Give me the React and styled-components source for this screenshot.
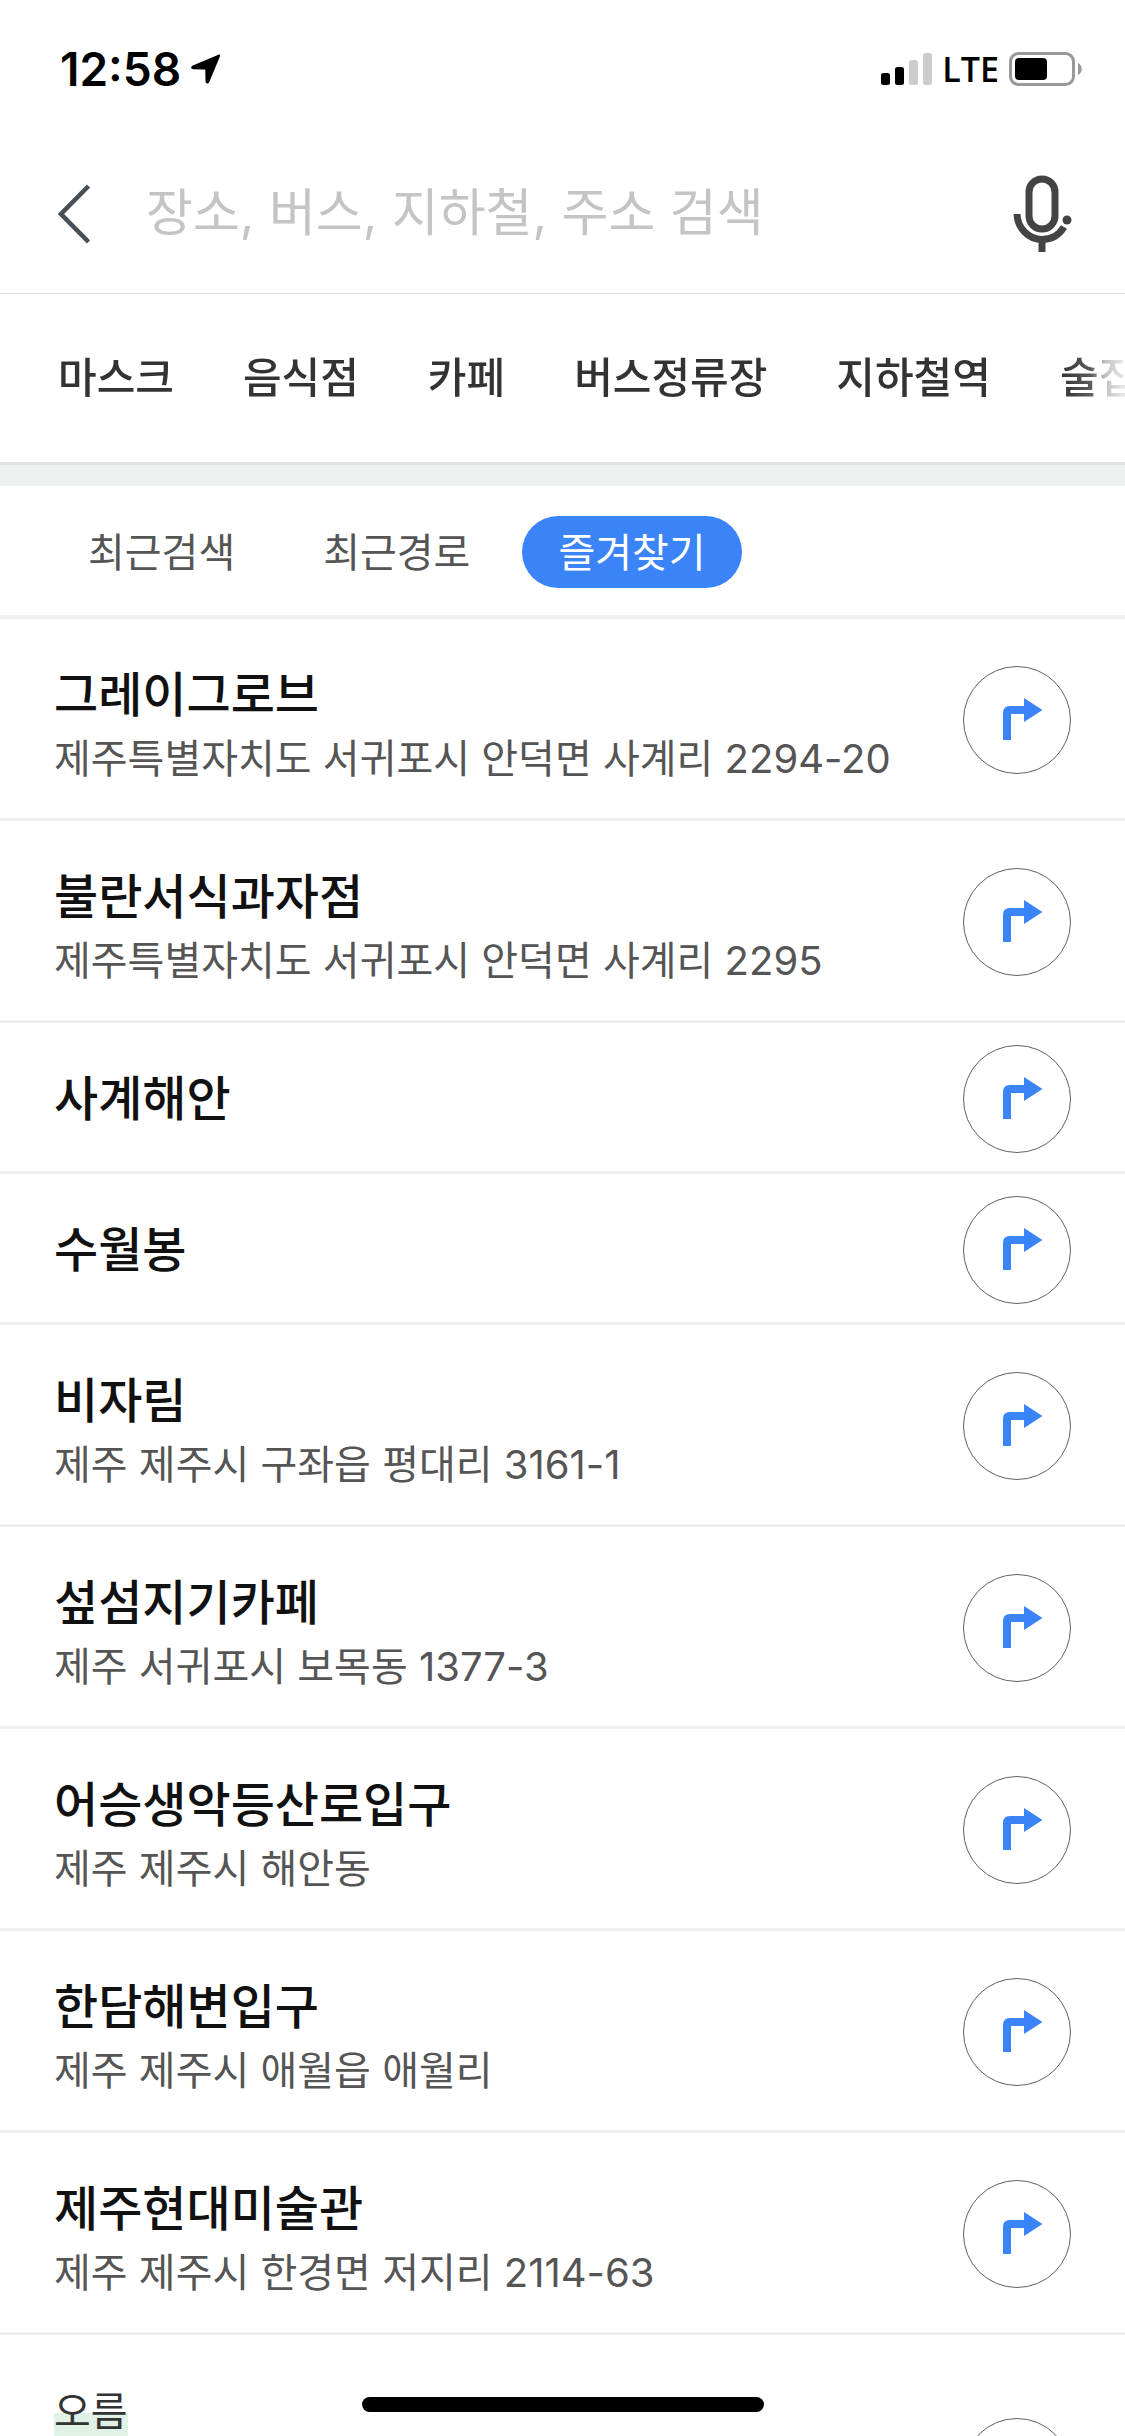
import React from "react";
import styled, { createGlobalStyle } from "styled-components";

const GlobalStyle = createGlobalStyle`
  *, *::before, *::after { box-sizing: border-box; }
  body {
    margin: 0;
    background: #fff;
    color: #111;
    font-family: Inter, "Noto Sans CJK KR", sans-serif;
  }
  button, input { font: inherit; color: inherit; }
  button { border: 0; padding: 0; background: none; cursor: pointer; white-space: nowrap; }
`;

const Screen = styled.div`
  height: 100vh;
  overflow: hidden;
  display: flex;
  flex-direction: column;
`;

const StatusBar = styled.header`
  flex: none;
  display: flex;
  align-items: center;
  justify-content: space-between;
  height: 138px;
  padding: 0 43px 0 60px;
  color: #000;
`;

const Cluster = styled.div`
  display: flex;
  align-items: center;
  gap: ${(p) => p.$gap}px;
`;

const Clock = styled.time`
  font-size: 46px;
  font-weight: 600;
  line-height: 56px;
`;

const Carrier = styled.span`
  font-family: "Open Sans", "Noto Sans", sans-serif;
  font-size: 34px;
  font-weight: 600;
  line-height: 56px;
`;

const SearchBar = styled.form`
  flex: none;
  display: flex;
  align-items: center;
  height: 156px;
  padding: 0 52px 4px 58px;
  border-bottom: 1px solid #dddddd;
`;

const IconButton = styled.button`
  flex: none;
  display: flex;
  align-items: center;
`;

const SearchInput = styled.input`
  flex: 1;
  min-width: 0;
  height: 96px;
  margin: 0 56px;
  padding: 0 0 2px;
  border: 0;
  outline: none;
  background: transparent;
  font-size: 51px;
  &::placeholder { color: #c4c4c4; opacity: 1; }
`;

const Categories = styled.nav`
  flex: none;
  display: flex;
  align-items: center;
  gap: 69px;
  height: 168px;
  padding-left: 58px;
  overflow: hidden;
  mask-image: linear-gradient(
    to left,
    rgba(0, 0, 0, 0.1) 0,
    rgba(0, 0, 0, 0.3) 20px,
    rgba(0, 0, 0, 0.8) 34px,
    #000 64px
  );
`;

const Category = styled.button`
  flex: none;
  color: #333;
  font-size: 42px;
  font-weight: 500;
  line-height: 64px;
`;

const Divider = styled.div`
  flex: none;
  height: 24px;
  background: #eef0f0;
  border-top: 3px solid #e2e2e2;
`;

const Tabs = styled.div`
  flex: none;
  display: flex;
  gap: 16px;
  padding: 30px 52px 27px;
  border-bottom: 4px solid #f1f1f1;
`;

const Tab = styled.button`
  height: 72px;
  padding: 0 36px 4px;
  border-radius: 36px;
  font-size: 40px;
  color: ${(p) => (p.$active ? "#fff" : "#555")};
  background: ${(p) => (p.$active ? "#3a84f7" : "transparent")};
`;

const List = styled.ul`
  flex: 1;
  margin: 0;
  padding: 0;
  list-style: none;
`;

const rowPadding = {
  full: "32px 54px 29px",
  compact: "22px 54px 18px",
  tagged: "47px 54px 80px",
};

const Row = styled.li`
  display: flex;
  align-items: ${(p) => (p.$kind === "tagged" ? "flex-end" : "center")};
  justify-content: space-between;
  gap: 48px;
  padding: ${(p) => rowPadding[p.$kind]};
  border-bottom: 3px solid #eeeeee;
`;

const Info = styled.div`
  min-width: 0;
  height: ${(p) => (p.$kind === "tagged" ? "144px" : "auto")};
  padding-top: ${(p) => (p.$kind === "full" ? "10px" : "0")};
`;

const Name = styled.h2`
  margin: 0;
  font-size: 48px;
  font-weight: 500;
  line-height: 68px;
`;

const Address = styled.p`
  margin: 0;
  color: #555;
  font-size: 40px;
  line-height: 60px;
`;

const Tag = styled.span`
  display: block;
  color: #333;
  font-size: 40px;
  line-height: 60px;
  background: linear-gradient(transparent 31px, #e0f1e6 31px);
`;

const RouteButton = styled.button`
  flex: none;
  display: grid;
  place-items: center;
  width: 108px;
  height: 108px;
  padding: 0 0 2px 12px;
  border: 1px solid #606060;
  border-radius: 50%;
`;

const HomeIndicator = styled.div`
  position: fixed;
  left: 50%;
  bottom: 24px;
  width: 402px;
  height: 15px;
  margin-left: -201px;
  border-radius: 8px;
  background: #000;
`;

const LocationIcon = () => (
  <svg width="30" height="30" viewBox="0 0 30 30" aria-hidden="true">
    <path d="M27.4.7 1.8 11.4C-.6 12.5-.2 15.2 2.2 15.3L13.3 15.5C14 15.5 14.3 15.8 14.3 16.5L14.5 27.3C14.6 29.9 17.2 30.2 18.3 27.9L28.9 2.6C29.4 1.2 28.7.2 27.4.7Z" fill="#000" />
  </svg>
);

const SignalIcon = () => (
  <svg width="51" height="32" viewBox="0 0 51 32" aria-hidden="true">
    <rect x="0" y="20" width="9" height="12" rx="2.5" fill="#000" />
    <rect x="14" y="14" width="9" height="18" rx="2.5" fill="#000" />
    <rect x="28" y="7" width="9" height="25" rx="2.5" fill="#ccc" />
    <rect x="42" y="0" width="9" height="32" rx="2.5" fill="#ccc" />
  </svg>
);

const BatteryIcon = () => (
  <svg width="73" height="34" viewBox="0 0 73 34" aria-hidden="true">
    <rect x="1.5" y="1.5" width="63" height="31" rx="8" fill="none" stroke="#999" strokeWidth="3" />
    <rect x="6" y="6" width="32" height="22" rx="4" fill="#000" />
    <path d="M69 11C74 13 74 21 69 23Z" fill="#999" />
  </svg>
);

const BackIcon = () => (
  <svg width="32" height="60" viewBox="0 0 32 60" aria-hidden="true">
    <path d="M30.5 2 3 30 30.5 58" fill="none" stroke="#474f57" strokeWidth="4.5" />
  </svg>
);

const MicIcon = () => (
  <svg width="60" height="78" viewBox="0 0 60 78" aria-hidden="true">
    <g fill="none" stroke="#444" strokeWidth="7">
      <rect x="16" y="4" width="26" height="50" rx="13" />
      <path d="M4 39C4.5 53 15.5 64.5 29 64.5 38.500 64.5 46.500 59.500 51 52" />
      <path d="M29 64V77" />
    </g>
    <circle cx="54" cy="45" r="4.5" fill="#444" />
  </svg>
);

const TurnIcon = () => (
  <svg width="40" height="44" viewBox="0 0 40 44" aria-hidden="true">
    <path d="M0 43V16Q0 9 7 9H21V1L39.5 13 21 25V17H8V43Z" fill="#3a84f7" />
  </svg>
);

const categories = ["마스크", "음식점", "카페", "버스정류장", "지하철역", "술집"];
const tabs = ["최근검색", "최근경로", "즐겨찾기"];
const places = [
  { name: "그레이그로브", address: "제주특별자치도 서귀포시 안덕면 사계리 2294-20" },
  { name: "불란서식과자점", address: "제주특별자치도 서귀포시 안덕면 사계리 2295" },
  { name: "사계해안" },
  { name: "수월봉" },
  { name: "비자림", address: "제주 제주시 구좌읍 평대리 3161-1" },
  { name: "섶섬지기카페", address: "제주 서귀포시 보목동 1377-3" },
  { name: "어승생악등산로입구", address: "제주 제주시 해안동" },
  { name: "한담해변입구", address: "제주 제주시 애월읍 애월리" },
  { name: "제주현대미술관", address: "제주 제주시 한경면 저지리 2114-63" },
  { tag: "오름" },
];

function Place({ name, address, tag }) {
  const kind = tag ? "tagged" : address ? "full" : "compact";
  return (
    <Row $kind={kind}>
      <Info $kind={kind}>
        {tag && <Tag>{tag}</Tag>}
        {name && <Name>{name}</Name>}
        {address && <Address>{address}</Address>}
      </Info>
      <RouteButton type="button" aria-label="길찾기">
        <TurnIcon />
      </RouteButton>
    </Row>
  );
}

export default function App() {
  return (
    <>
      <GlobalStyle />
      <Screen>
        <StatusBar>
          <Cluster $gap={10}>
            <Clock>12:58</Clock>
            <LocationIcon />
          </Cluster>
          <Cluster $gap={10}>
            <SignalIcon />
            <Carrier>LTE</Carrier>
            <BatteryIcon />
          </Cluster>
        </StatusBar>
        <SearchBar role="search">
          <IconButton type="button" aria-label="뒤로">
            <BackIcon />
          </IconButton>
          <SearchInput
            type="text"
            aria-label="검색"
            placeholder="장소, 버스, 지하철, 주소 검색"
          />
          <IconButton type="button" aria-label="음성 검색">
            <MicIcon />
          </IconButton>
        </SearchBar>
        <Categories>
          {categories.map((label) => (
            <Category key={label} type="button">{label}</Category>
          ))}
        </Categories>
        <Divider />
        <Tabs>
          {tabs.map((label) => (
            <Tab key={label} type="button" $active={label === "즐겨찾기"}>{label}</Tab>
          ))}
        </Tabs>
        <List>
          {places.map((place) => (
            <Place key={place.name || place.tag} {...place} />
          ))}
        </List>
      </Screen>
      <HomeIndicator />
    </>
  );
}
